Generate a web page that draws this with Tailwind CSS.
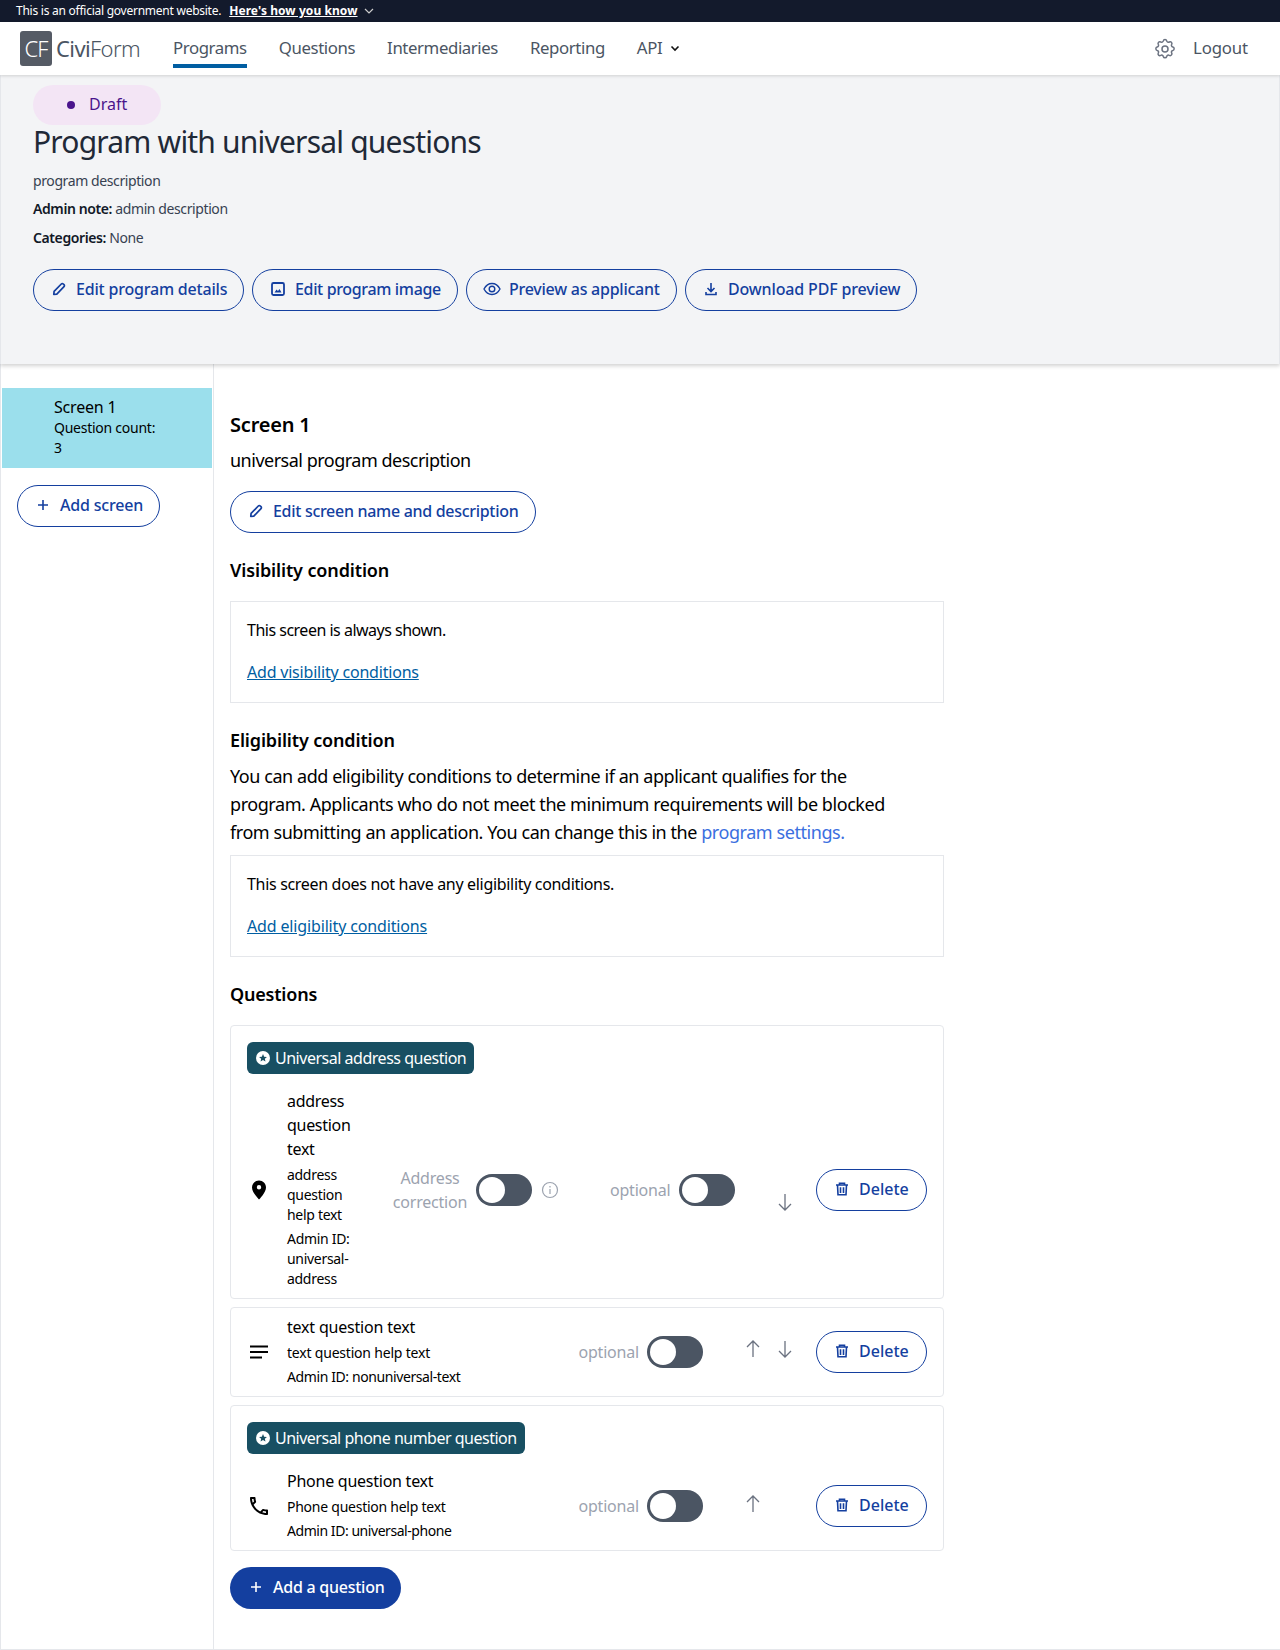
<!DOCTYPE html>
<html><head><meta charset="utf-8"><script src="https://cdn.jsdelivr.net/npm/@tailwindcss/browser@4"></script></head>
<body class="font-['Noto_Sans',sans-serif] bg-white text-black h-[1650px] overflow-hidden">
<div class="h-[22px] bg-[#131a2c] text-white text-[12px] flex items-center pl-4 gap-2"><span class="tracking-[-0.25px]">This is an official government website.</span><span class="font-bold underline tracking-[0.07px]">Here's how you know</span><svg class="w-3 h-3 -ml-[3px]" viewBox="0 0 12 12" fill="none" stroke="#ccc" stroke-width="1.2"><path d="M2 4l4 4 4-4"/></svg></div>
<nav class="h-[53px] bg-white flex items-center shadow-[0_1px_3px_rgba(0,0,0,0.15)] relative z-10 pl-5 pr-8 text-[#4b5563] text-[16.8px]">
  <div class="w-[32px] h-[35px] bg-[#555b65] rounded-[3px] text-white text-[22px] font-light flex items-center justify-center tracking-[-1px]">CF</div>
  <div class="ml-[4px] text-[22px] font-light w-[117px] tracking-[-0.6px]"><span class="font-normal">Civi</span>Form</div>
  <div class="flex items-center gap-[32px] tracking-[-0.4px] -mt-[2px]">
    <span class="relative leading-[26px]">Programs<span class="absolute left-0 right-0 -bottom-[7px] h-[4px] bg-[#005ea2]"></span></span><span>Questions</span><span>Intermediaries</span><span>Reporting</span>
    <span class="flex items-center gap-2">API <svg class="w-2.5 h-2.5" viewBox="0 0 10 10" fill="none" stroke="#111" stroke-width="1.6"><path d="M1.5 3.5L5 7l3.5-3.5"/></svg></span>
  </div>
  <svg class="ml-auto w-[24px] h-[24px]" viewBox="0 0 24 24" fill="none" stroke="#6b7280" stroke-width="1.5"><path stroke-linecap="round" stroke-linejoin="round" d="M10.3 3.9c.4-1.8 3-1.8 3.4 0a1.7 1.7 0 0 0 2.6 1.1c1.5-.9 3.3.8 2.4 2.4a1.7 1.7 0 0 0 1.1 2.6c1.8.4 1.8 3 0 3.4a1.7 1.7 0 0 0-1.1 2.6c.9 1.5-.8 3.3-2.4 2.4a1.7 1.7 0 0 0-2.6 1.1c-.4 1.8-3 1.8-3.4 0a1.7 1.7 0 0 0-2.6-1.1c-1.5.9-3.3-.8-2.4-2.4a1.7 1.700 0 0 0-1.100-2.600c-1.800-.4-1.800-3 0-3.400a1.700 1.700 0 0 0 1.100-2.600c-.9-1.500.8-3.300 2.400-2.400.9.6 2.300.1 2.600-1.100z"/><circle cx="12" cy="12" r="3"/></svg>
  <span class="ml-[16px] -mt-[2px] tracking-[-0.15px]">Logout</span>
</nav>
<header class="h-[289px] bg-[#f3f4f6] border-x border-[#e5e7eb] shadow-[0_2px_4px_rgba(0,0,0,0.18)] relative z-[5] pl-[32px] pt-[10px]">
  <div class="w-[128px] h-[40px] rounded-full bg-[#f3e5f5] text-[#4a148c] text-[16px] leading-[38px] flex items-center pl-[34px] gap-[14px]"><span class="w-2 h-2 rounded-full bg-[#4a148c]"></span><span class="-mt-[2px]">Draft</span></div>
  <h1 class="text-[30px] leading-[36px] text-[#1f2937] -mt-[1px] tracking-[-0.8px]">Program with universal questions</h1>
  <p class="text-[14px] leading-[28.4px] text-[#374151] mt-[7px] tracking-[-0.4px]">program description</p>
  <p class="text-[14px] leading-[28.4px] text-[#374151] tracking-[-0.4px]"><b class="font-semibold text-[#111827]">Admin note:</b> admin description</p>
  <p class="text-[14px] leading-[28.4px] text-[#374151] tracking-[-0.4px]"><b class="font-semibold text-[#111827]">Categories:</b> None</p>
  <div class="flex gap-2 mt-[17px]">
    <span class="h-[42px] w-[211px] rounded-full border border-[#143f9f] text-[#143f9f] font-medium text-[16px] flex items-center pl-[17px] pb-[2px] gap-[9px] tracking-[-0.2px]"><svg class="w-4 h-4" viewBox="0 0 16 16" fill="none" stroke="#143f9f" stroke-width="1.7" stroke-linejoin="round"><path d="M2.800 13.400l.3-3L10.300 3a1.400 1.400 0 0 1 2 0l.7.7a1.400 1.400 0 0 1 0 2L5.800 13.100z"/></svg>Edit program details</span>
    <span class="h-[42px] w-[206px] rounded-full border border-[#143f9f] text-[#143f9f] font-medium text-[16px] flex items-center pl-[17px] pb-[2px] gap-[9px] tracking-[-0.35px]"><svg class="w-4 h-4" viewBox="0 0 16 16" fill="none" stroke="#143f9f" stroke-width="1.800"><rect x="2" y="2" width="12" height="12" rx="1.500"/><path d="M4.500 11.500l2-3 1.500 1.500 1.500-2 2 3.500z" fill="#143f9f" stroke="none"/></svg>Edit program image</span>
    <span class="h-[42px] w-[211px] rounded-full border border-[#143f9f] text-[#143f9f] font-medium text-[16px] flex items-center pl-[16px] pb-[2px] gap-[8px] tracking-[-0.25px]"><svg class="w-[18px] h-[18px]" viewBox="0 0 18 18" fill="none" stroke="#143f9f" stroke-width="1.400"><path d="M1 9c2-3.800 5-5.500 8-5.500s6 1.700 8 5.500c-2 3.800-5 5.500-8 5.500S3 12.800 1 9z"/><circle cx="9" cy="9" r="2.800"/></svg>Preview as applicant</span>
    <span class="h-[42px] w-[232px] rounded-full border border-[#143f9f] text-[#143f9f] font-medium text-[16px] flex items-center pl-[17px] pb-[2px] gap-[9px] tracking-[-0.15px]"><svg class="w-4 h-4" viewBox="0 0 16 16" fill="none" stroke="#143f9f" stroke-width="1.600"><path d="M8 2v8M4.500 7L8 10.500 11.500 7M3 11v2.500h10V11"/></svg>Download PDF preview</span>
  </div>
</header>
<div class="flex h-[1286px] border-l border-[#e5e7eb] border-b">
  <aside class="w-[213px] shrink-0 border-r border-[#e5e7eb] pt-[24px] pl-px">
    <div class="w-[210px] h-[80px] bg-[#9bdfec] pl-[52px] pt-[8px] text-[14px] leading-[20px] tracking-[-0.25px]"><div class="text-[16px] leading-[22px] tracking-[-0.2px]">Screen 1</div><div>Question count:</div><div>3</div></div>
    <span class="mt-[17px] ml-[15px] h-[42px] w-[143px] rounded-full border border-[#143f9f] text-[#143f9f] font-medium text-[16px] flex items-center pl-[17px] pb-[2px] gap-[9px] tracking-[-0.2px]"><svg class="w-4 h-4" viewBox="0 0 16 16" fill="none" stroke="#143f9f" stroke-width="1.600"><path d="M8 3v10M3 8h10"/></svg>Add screen</span>
  </aside>
  <main class="w-[714px] ml-[16px] pt-[47px]">
    <h2 class="text-[20px] leading-[28px] font-semibold tracking-[-0.2px]">Screen 1</h2>
    <p class="text-[18px] leading-[28px] mt-[7px] tracking-[-0.5px]">universal program description</p>
    <span class="mt-[17px] h-[42px] w-[306px] rounded-full border border-[#143f9f] text-[#143f9f] font-medium text-[16px] flex items-center pl-[17px] pb-[2px] gap-[9px] tracking-[-0.3px]"><svg class="w-4 h-4" viewBox="0 0 16 16" fill="none" stroke="#143f9f" stroke-width="1.700" stroke-linejoin="round"><path d="M2.800 13.400l.3-3L10.300 3a1.400 1.400 0 0 1 2 0l.7.7a1.400 1.400 0 0 1 0 2L5.800 13.100z"/></svg>Edit screen name and description</span>
    <h3 class="text-[18px] leading-[28px] font-semibold mt-[23px] tracking-[-0.13px]">Visibility condition</h3>
    <div class="h-[102px] mt-[17px] border border-[#e5e7eb] pl-4 pt-[14px] text-[16px]"><p class="leading-[28px] tracking-[-0.5px]">This screen is always shown.</p><p class="leading-[28px] mt-[14px] text-[#005ea2] underline tracking-[-0.2px]">Add visibility conditions</p></div>
    <h3 class="text-[18px] leading-[28px] font-semibold mt-[23px] tracking-[-0.15px]">Eligibility condition</h3>
    <p class="text-[18px] leading-[28px] mt-[8px] w-[660px] tracking-[-0.44px]">You can add eligibility conditions to determine if an applicant qualifies for the program. Applicants who do not meet the minimum requirements will be blocked from submitting an application. You can change this in the <span class="text-[#3b6fe0]">program settings.</span></p>
    <div class="h-[102px] mt-[9px] border border-[#e5e7eb] pl-4 pt-[14px] text-[16px]"><p class="leading-[28px] tracking-[-0.32px]">This screen does not have any eligibility conditions.</p><p class="leading-[28px] mt-[14px] text-[#005ea2] underline tracking-[-0.15px]">Add eligibility conditions</p></div>
    <h3 class="text-[18px] leading-[28px] font-semibold mt-[23px] tracking-[-0.2px]">Questions</h3>

    <div class="h-[274px] mt-[17px] border border-[#e5e7eb] rounded-[4px] p-4">
      <div class="w-fit h-[32px] rounded-[6px] bg-[#184f62] text-white text-[16px] flex items-center pl-[9px] pr-[8px] pb-[1px] gap-[5px] tracking-[-0.48px]"><svg class="w-[14px] h-[14px]" viewBox="0 0 16 16"><circle cx="8" cy="8" r="8" fill="#fff"/><path d="M8 3.500l1.300 3 3.200.3-2.400 2.100.7 3.100L8 10.400 5.200 12l.7-3.100L3.500 6.800l3.200-.3z" fill="#184f62"/></svg>Universal address question</div>
      <div class="flex items-center h-[202px] mt-[15px]">
        <svg class="w-6 h-6 shrink-0" viewBox="0 0 24 24"><path fill-rule="evenodd" d="M12 2.500c-3.900 0-7 3-7 6.900 0 5 7 12.100 7 12.100s7-7.100 7-12.100c0-3.900-3.100-6.900-7-6.900zm0 9a2.200 2.200 0 1 1 0-4.400 2.200 2.200 0 0 1 0 4.400z"/></svg>
        <div class="w-[82px] ml-[16px] shrink-0 tracking-[-0.3px] self-start">
          <p class="text-[16px] leading-[24px]">address question text</p>
          <p class="text-[14px] leading-[20px] mt-[4px]">address question help text</p>
          <p class="text-[14px] leading-[20px] mt-[4px]">Admin ID: universal-address</p>
        </div>
        <span class="w-[76px] ml-[23px] text-center text-[16px] leading-[24px] text-[#9ca3af] tracking-[-0.2px]">Address correction</span>
        <span class="ml-[8px] w-[56px] h-[32px] rounded-full bg-[#4b5563] p-[3px] shrink-0"><span class="block w-[26px] h-[26px] rounded-full bg-white"></span></span>
        <svg class="ml-[9px] w-[18px] h-[18px]" viewBox="0 0 18 18" fill="none" stroke="#9ca3af" stroke-width="1.200"><circle cx="9" cy="9" r="7.500"/><path d="M9 8v5M9 5v1.500"/></svg>
        <span class="ml-[51px] text-[16px] text-[#9ca3af] tracking-[-0.2px]">optional</span>
        <span class="ml-[8px] w-[56px] h-[32px] rounded-full bg-[#4b5563] p-[3px] shrink-0"><span class="block w-[26px] h-[26px] rounded-full bg-white"></span></span>
        <svg class="ml-[40px] mt-[24px] w-5 h-5" viewBox="0 0 20 20" fill="none" stroke="#6b7280" stroke-width="1.300"><path d="M10 2v16M4 12l6 6 6-6"/></svg>
        <span class="ml-auto h-[42px] w-[111px] rounded-full border border-[#143f9f] text-[#143f9f] font-medium text-[16px] flex items-center pl-[18px] pb-[2px] gap-[10px] shrink-0"><svg class="w-[14px] h-[14px]" viewBox="0 0 14 16" preserveAspectRatio="none" fill="none" stroke="#143f9f" stroke-width="1.600"><path d="M1 3.500h12M4.500 3.500V1.500h5v2M2.500 3.500l.5 11h8l.5-11M5.500 6v6.500M8.500 6v6.500"/></svg>Delete</span>
      </div>
    </div>

    <div class="h-[90px] mt-[8px] border border-[#e5e7eb] rounded-[4px] pl-4 pr-4 flex items-center">
      <svg class="w-6 h-6 shrink-0" viewBox="0 0 24 24"><path d="M3 5.500h18v2H3zM3 11h18v2H3zM3 16.500h12v2H3z"/></svg>
      <div class="ml-[16px] -mt-[3px]"><p class="text-[16px] leading-[24px] tracking-[-0.2px]">text question text</p><p class="text-[14px] leading-[20px] mt-[4px] tracking-[-0.2px]">text question help text</p><p class="text-[14px] leading-[20px] mt-[4px] tracking-[-0.4px]">Admin ID: nonuniversal-text</p></div>
      <span class="ml-auto text-[16px] text-[#9ca3af] tracking-[-0.2px]">optional</span>
      <span class="ml-[8px] w-[56px] h-[32px] rounded-full bg-[#4b5563] p-[3px] shrink-0"><span class="block w-[26px] h-[26px] rounded-full bg-white"></span></span>
      <svg class="ml-[40px] -mt-[6px] w-5 h-5" viewBox="0 0 20 20" fill="none" stroke="#6b7280" stroke-width="1.300"><path d="M10 18V2M4 8l6-6 6 6"/></svg>
      <svg class="ml-[12px] -mt-[6px] w-5 h-5" viewBox="0 0 20 20" fill="none" stroke="#6b7280" stroke-width="1.300"><path d="M10 2v16M4 12l6 6 6-6"/></svg>
      <span class="ml-[21px] h-[42px] w-[111px] rounded-full border border-[#143f9f] text-[#143f9f] font-medium text-[16px] flex items-center pl-[18px] pb-[2px] gap-[10px] shrink-0"><svg class="w-[14px] h-[14px]" viewBox="0 0 14 16" preserveAspectRatio="none" fill="none" stroke="#143f9f" stroke-width="1.600"><path d="M1 3.500h12M4.500 3.500V1.500h5v2M2.500 3.500l.5 11h8l.5-11M5.500 6v6.500M8.500 6v6.500"/></svg>Delete</span>
    </div>

    <div class="h-[146px] mt-[8px] border border-[#e5e7eb] rounded-[4px] p-4">
      <div class="w-fit h-[32px] rounded-[6px] bg-[#184f62] text-white text-[16px] flex items-center pl-[9px] pr-[8px] pb-[1px] gap-[5px] tracking-[-0.5px]"><svg class="w-[14px] h-[14px]" viewBox="0 0 16 16"><circle cx="8" cy="8" r="8" fill="#fff"/><path d="M8 3.500l1.300 3 3.200.3-2.400 2.100.7 3.100L8 10.400 5.200 12l.7-3.100L3.500 6.800l3.200-.3z" fill="#184f62"/></svg>Universal phone number question</div>
      <div class="flex items-center mt-[15px] h-[74px]">
        <svg class="w-6 h-6 shrink-0" viewBox="0 0 24 24"><path d="M6.540 5c.06.89.21 1.760.45 2.590l-1.200 1.200c-.41-1.200-.67-2.470-.76-3.790h1.510m9.860 12.020c.85.24 1.720.39 2.600.45v1.490c-1.320-.09-2.590-.35-3.800-.75l1.200-1.190M7.500 3H4c-.55 0-1 .45-1 1 0 9.390 7.610 17 17 17 .55 0 1-.45 1-1v-3.490c0-.55-.45-1-1-1-1.240 0-2.450-.2-3.570-.57-.1-.04-.21-.05-.31-.05-.26 0-.51.1-.71.29l-2.200 2.200c-2.830-1.450-5.150-3.760-6.590-6.590l2.200-2.200c.28-.28.36-.67.25-1.020C8.700 6.450 8.500 5.250 8.500 4c0-.55-.45-1-1-1z"/></svg>
        <div class="ml-[16px] self-start"><p class="text-[16px] leading-[24px] tracking-[-0.25px]">Phone question text</p><p class="text-[14px] leading-[20px] mt-[4px] tracking-[-0.25px]">Phone question help text</p><p class="text-[14px] leading-[20px] mt-[4px] tracking-[-0.45px]">Admin ID: universal-phone</p></div>
        <span class="ml-auto text-[16px] text-[#9ca3af] tracking-[-0.2px]">optional</span>
        <span class="ml-[8px] w-[56px] h-[32px] rounded-full bg-[#4b5563] p-[3px] shrink-0"><span class="block w-[26px] h-[26px] rounded-full bg-white"></span></span>
        <svg class="ml-[40px] -mt-[4px] w-5 h-5" viewBox="0 0 20 20" fill="none" stroke="#6b7280" stroke-width="1.300"><path d="M10 18V2M4 8l6-6 6 6"/></svg>
        <span class="ml-[53px] h-[42px] w-[111px] rounded-full border border-[#143f9f] text-[#143f9f] font-medium text-[16px] flex items-center pl-[18px] pb-[2px] gap-[10px] shrink-0"><svg class="w-[14px] h-[14px]" viewBox="0 0 14 16" preserveAspectRatio="none" fill="none" stroke="#143f9f" stroke-width="1.600"><path d="M1 3.500h12M4.500 3.500V1.500h5v2M2.500 3.500l.5 11h8l.5-11M5.500 6v6.500M8.500 6v6.500"/></svg>Delete</span>
      </div>
    </div>
    <span class="mt-[16px] h-[42px] w-[171px] rounded-full bg-[#143f9f] text-white font-medium text-[16px] flex items-center pl-[18px] pb-[2px] gap-[9px] tracking-[-0.25px]"><svg class="w-4 h-4" viewBox="0 0 16 16" fill="none" stroke="#fff" stroke-width="1.600"><path d="M8 3v10M3 8h10"/></svg>Add a question</span>
  </main>
</div>
</body></html>
